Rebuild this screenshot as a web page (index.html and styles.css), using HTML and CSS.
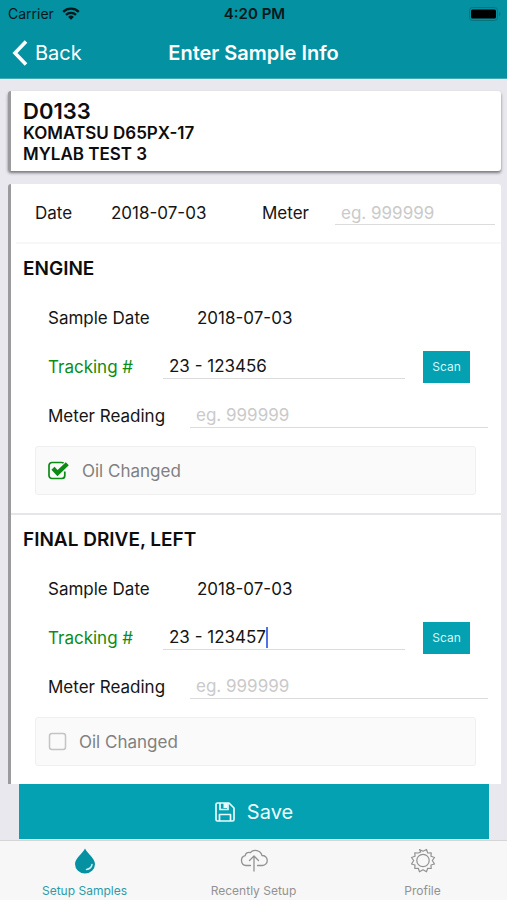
FILE: index.html
```html
<!DOCTYPE html>
<html lang="en">
<head>
<meta charset="utf-8">
<meta name="viewport" content="width=device-width, initial-scale=1">
<title>Enter Sample Info</title>
<link rel="stylesheet" href="styles.css">
</head>
<body>
<header class="top">
  <div class="status">
    <div class="carrier">
      <span>Carrier</span>
      <svg width="18" height="13" viewBox="0 0 18 13" aria-hidden="true"><g fill="none" stroke="#06181b" stroke-width="2.3"><path d="M1.2 4.8a11.2 11.2 0 0 1 15.6 0"/><path d="M4 7.9a7.2 7.2 0 0 1 10 0"/></g><path d="M9 12.8 6.1 9.9a4.1 4.1 0 0 1 5.8 0z" fill="#06181b"/></svg>
    </div>
    <time class="clock">4:20 PM</time>
    <div class="battery">
      <svg width="32" height="14" viewBox="0 0 32 14" aria-hidden="true"><rect x=".5" y=".5" width="28" height="13" rx="3" fill="none" stroke="#08727d"/><rect x="2" y="2.5" width="25" height="9" rx="1.5" fill="#000"/><path d="M30 5v4q1.400-.5 1.400-2T30 5z" fill="#08727d"/></svg>
    </div>
  </div>
  <nav class="nav">
    <a class="back" href="#back">
      <svg width="17" height="28" viewBox="0 0 17 28" aria-hidden="true"><path d="M14 2.500 3 14l11 11.500" fill="none" stroke="#fff" stroke-width="3.600"/></svg>
      <span>Back</span>
    </a>
    <h1>Enter Sample Info</h1>
  </nav>
</header>

<main>
  <section class="card machine">
    <h2>D0133</h2>
    <p>KOMATSU D65PX-17</p>
    <p>MYLAB TEST 3</p>
  </section>

  <form class="card samples" id="samples">
    <div class="summary">
      <span>Date</span>
      <time>2018-07-03</time>
      <label for="meter">Meter</label>
      <input class="field" id="meter" placeholder="eg. 999999">
    </div>

    <section class="sample">
      <h3>ENGINE</h3>
      <div class="row date">
        <span>Sample Date</span>
        <time>2018-07-03</time>
      </div>
      <div class="row tracking">
        <label for="track1">Tracking #</label>
        <input class="field" id="track1" value="23 - 123456">
        <button class="scan" type="button">Scan</button>
      </div>
      <div class="row reading">
        <label for="read1">Meter Reading</label>
        <input class="field" id="read1" placeholder="eg. 999999">
      </div>
      <label class="oil">
        <input type="checkbox" checked>
        <svg class="tick" width="22" height="19" viewBox="0 0 22 19" aria-hidden="true"><path d="M16.800 10.500v4a3 3 0 0 1-3 3H4a3 3 0 0 1-3-3V4.500a3 3 0 0 1 3-3h9.800q1 0 1.800.5" fill="none" stroke="#0b8a14" stroke-width="1.700"/><path d="m5 7.300 4.500 4.800 9.800-9.300" fill="none" stroke="#0b8a14" stroke-width="4.300"/></svg>
        <span>Oil Changed</span>
      </label>
    </section>

    <section class="sample">
      <h3>FINAL DRIVE, LEFT</h3>
      <div class="row date">
        <span>Sample Date</span>
        <time>2018-07-03</time>
      </div>
      <div class="row tracking">
        <label for="track2">Tracking #</label>
        <div class="field active"><input id="track2" value="23 - 123457"><i class="caret"></i></div>
        <button class="scan" type="button">Scan</button>
      </div>
      <div class="row reading">
        <label for="read2">Meter Reading</label>
        <input class="field" id="read2" placeholder="eg. 999999">
      </div>
      <label class="oil">
        <input type="checkbox">
        <svg class="tick" width="19" height="19" viewBox="0 0 19 19" aria-hidden="true"><rect x="1.500" y="1.500" width="16" height="16" rx="2.500" fill="none" stroke="#c4c4c4" stroke-width="1.500"/></svg>
        <span>Oil Changed</span>
      </label>
    </section>
  </form>

  <button class="save" type="submit" form="samples">
    <svg width="20" height="20" viewBox="0 0 20 20" aria-hidden="true"><g fill="none" stroke="#e9fbfd" stroke-width="1.700" stroke-linejoin="round"><path d="M1 2.500Q1 1 2.500 1h11.500L19 6v11.500q0 1.500-1.500 1.500h-15Q1 19 1 17.500z"/><path d="M4.500 19v-6.500h11V19M5 1v6.500h8V1"/></g><path d="M8.500 1H12.500V6H8.500z" fill="#e9fbfd"/></svg>
    <span>Save</span>
  </button>
</main>

<nav class="tabs">
  <a class="current" href="#setup">
    <svg width="28" height="28" viewBox="0 0 28 28" aria-hidden="true"><path d="M14 1.500C11.500 6.500 4 11.500 4 17a10 9.500 0 0 0 20 0C24 11.500 16.500 6.500 14 1.500z" fill="#0491a1"/><path d="M21 17.500c-.5 2.800-2.500 4.500-5.500 5" fill="none" stroke="#c9edf0" stroke-width="1.500" stroke-linecap="round"/></svg>
    <span>Setup Samples</span>
  </a>
  <a href="#recent">
    <svg width="28" height="28" viewBox="0 0 28 28" aria-hidden="true"><g fill="none" stroke="#929292" stroke-width="1.300" stroke-linecap="round" stroke-linejoin="round"><path d="M10.500 18.500H6a5 5 0 0 1-.8-9.800 3.500 3.500 0 0 1 5-3A7 7 0 0 1 22 8.500a5 5 0 0 1 .5 10h-5"/><path d="M14 24V9.500M9.500 13.500 14 9l4.500 4.500"/></g></svg>
    <span>Recently Setup</span>
  </a>
  <a href="#profile">
    <svg width="28" height="28" viewBox="0 0 28 28" aria-hidden="true"><g fill="none" stroke="#929292" stroke-width="1.200" stroke-linejoin="round"><circle cx="14" cy="13.500" r="6.200"/><path d="m11.700 5-1.200-2.500L14 4.300l3.500-1.800L18.700 6l3.500-.2L22 9.300l3.500 1.200L23.300 13.500l2.200 3.500-3.500 1 .2 3.500-3.500-.2-1.200 3.500L14 22.800l-3.500 2-1.200-3.500-3.500.2.200-3.500-3.500-1 2.200-3.500-2.200-3L6 9.300l-.2-3.500 3.500.2z"/></g></svg>
    <span>Profile</span>
  </a>
</nav>
</body>
</html>
```
FILE: styles.css
```css
* { box-sizing: border-box; }

body {
  margin: 0;
  min-height: 100vh;
  display: flex;
  flex-direction: column;
  background: #e9e8ee;
  color: #151515;
  font: 17px/20px Inter, "Liberation Sans", sans-serif;
}

h1, h2, h3, p { margin: 0; }
a { color: inherit; text-decoration: none; }
button, input { font: inherit; color: inherit; border: 0; padding: 0; margin: 0; border-radius: 0; }
svg { display: block; flex: none; }

.top { background: #0491a1; border-bottom: 1px solid #45a9b5; }

.status {
  height: 27px;
  padding: 0 6px 0 8px;
  display: grid;
  grid-template-columns: 1fr auto 1fr;
  align-items: center;
  font-size: 14px;
  color: #06181b;
}
.carrier { display: flex; align-items: center; gap: 8px; }
.clock { font-size: 15px; font-weight: 600; }
.battery { justify-self: end; }

.nav {
  height: 51px;
  padding: 0 12px;
  display: grid;
  grid-template-columns: 1fr auto 1fr;
  align-items: center;
  color: #fff;
}
.back { display: flex; align-items: center; gap: 6px; font-size: 20px; }
.nav h1 { font-size: 20px; font-weight: 600; }

main { flex: 1; display: flex; flex-direction: column; }

.card {
  margin: 12px 6px 0 8px;
  background: #fff;
  border-left: 3px solid #9b9b9e;
  border-radius: 3px;
}
.machine {
  padding: 9px 12px 6px;
  font-weight: 600;
  color: #0d0d0d;
  box-shadow: 0 2px 3px #77777b;
}
.machine h2 { font-size: 22px; line-height: 23px; font-weight: 600; }
.machine p { line-height: 21px; }
.samples { margin-top: 13px; border-radius: 3px 3px 0 0; }

.summary {
  height: 60px;
  margin-left: 5px;
  padding: 0 6px 0 19px;
  display: grid;
  grid-template-columns: 76px 151px 73px 1fr;
  align-items: center;
  border-bottom: 2px solid #f7f7f7;
}

.field {
  width: 100%;
  min-width: 0;
  height: 24px;
  padding: 0 6px;
  background: transparent;
  border-bottom: 1px solid #dcdcdf;
  outline: 0;
}
.field::placeholder { color: #cacaca; opacity: 1; }
.active { display: flex; align-items: center; }
.active input { field-sizing: content; background: transparent; outline: 0; }
.caret { width: 2px; height: 21px; background: #5570e8; }

.sample + .sample { border-top: 2px solid #e6e6e8; }
.sample { padding-bottom: 18px; }
.sample h3 {
  padding-left: 12px;
  font-size: 19px;
  font-weight: 600;
  line-height: 49px;
  color: #0d0d0d;
}
.row { height: 49px; padding-left: 37px; display: grid; align-items: center; }
.date { grid-template-columns: 149px 1fr; }
.tracking { grid-template-columns: 115px 1fr 47px; padding-right: 31px; }
.tracking label { color: #0d8c16; }
.tracking .field { width: auto; margin-right: 18px; }
.reading { grid-template-columns: 142px 1fr; padding-right: 13px; }

.scan { height: 32px; background: #03a1b1; color: #d8f6f8; font-size: 12px; }

.oil {
  height: 49px;
  margin: 6px 25px 0 24px;
  padding-left: 12px;
  display: flex;
  align-items: center;
  gap: 12px;
  background: #fafafa;
  border: 1px solid #efefef;
  border-radius: 3px;
  color: #808080;
}
.oil input { appearance: none; position: absolute; width: 22px; height: 19px; }

.save {
  height: 55px;
  margin: 0 18px 0 19px;
  display: flex;
  align-items: center;
  justify-content: center;
  gap: 12px;
  background: #03a1b1;
  color: #effcfd;
  font-size: 20px;
}

.tabs {
  height: 60px;
  display: grid;
  grid-template-columns: repeat(3, 1fr);
  background: #f7f7f7;
  border-top: 1px solid #d5d5d8;
  color: #929292;
  font-size: 12px;
}
.tabs a { display: flex; flex-direction: column; align-items: center; padding-top: 6px; gap: 6px; }
.tabs .current { color: #2a9dab; }
```
